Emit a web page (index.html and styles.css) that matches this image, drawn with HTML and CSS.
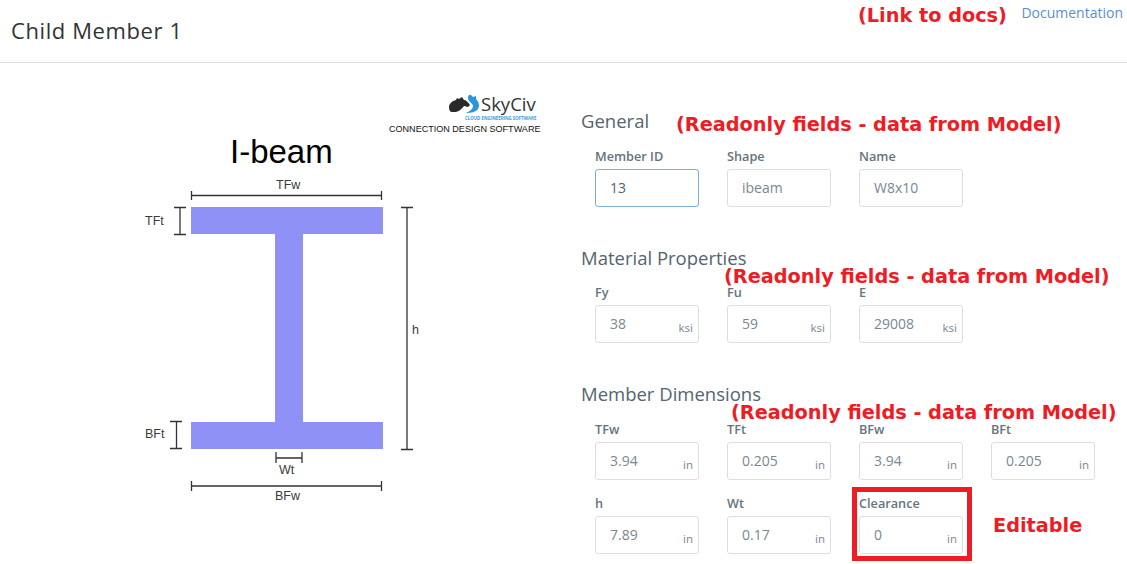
FILE: index.html
```html
<!DOCTYPE html>
<html lang="en">
<head>
<meta charset="utf-8">
<title>Child Member 1</title>
<link rel="stylesheet" href="styles.css">
</head>
<body>
<div class="page">
  <header class="topbar">
    <h1 class="title">Child Member 1</h1>
    <a class="doclink" href="#">Documentation</a>
  </header>
  <main class="content">
    <section class="diagram">
      <svg class="beam" width="570" height="501" viewBox="0 63 570 501" xmlns="http://www.w3.org/2000/svg">
        <path class="logo-dark" d="M449 107c0-3 3-6 7-7l1-2 2 1 3-2 2 3c2 0 4 2 6 5l-2 2-4-1c-2 2-4 5-8 6h-4c-2 0-3-2-3-5z"/>
        <path class="logo-blue" d="M471 95l2 2 3-1v3c3 3 4 7 2 10-2 3-7 4-12 4 4-2 7-4 7-7 0-3-5-4-5-8 0-2 1-4 3-3z"/>
        <text class="logo-word" x="481" y="111">SkyCiv</text>
        <text class="logo-tag" x="465" y="120">CLOUD ENGINEERING SOFTWARE</text>
        <text class="logo-sub" x="389" y="132">CONNECTION DESIGN SOFTWARE</text>
        <text class="beam-title" x="230" y="163">I-beam</text>
        <polygon class="section" points="191,207 383,207 383,234 303,234 303,422 383,422 383,449 191,449 191,422 275,422 275,234 191,234"/>
        <g class="dim">
          <path d="M191.500 191v9M381.500 191v9M191 195.500h191"/>
          <path d="M174 207.500h12M180 207v27M174 234.500h12"/>
          <path d="M401 207.500h12M407 207v243M401 449.500h12"/>
          <path d="M170 421.500h12M176.500 421v28M170 448.500h12"/>
          <path d="M276 452v11M302 452v11M276 458h26"/>
          <path d="M191.500 481v10M381.500 481v10M191 486h191"/>
        </g>
        <g class="dim-label">
          <text x="276" y="189">TFw</text>
          <text x="145" y="225">TFt</text>
          <text x="412" y="334">h</text>
          <text x="145" y="438">BFt</text>
          <text x="279" y="474">Wt</text>
          <text x="275" y="500">BFw</text>
        </g>
      </svg>
    </section>
    <section class="form">
      <div class="group group-general">
        <h2 class="group-title">General</h2>
        <div class="fields fields-low">
          <div class="field"><label class="label">Member ID</label><div class="input active">13</div></div>
          <div class="field"><label class="label">Shape</label><div class="input">ibeam</div></div>
          <div class="field"><label class="label">Name</label><div class="input">W8x10</div></div>
        </div>
      </div>
      <div class="group group-material">
        <h2 class="group-title">Material Properties</h2>
        <div class="fields">
          <div class="field"><label class="label">Fy</label><div class="input">38<span class="unit">ksi</span></div></div>
          <div class="field"><label class="label">Fu</label><div class="input">59<span class="unit">ksi</span></div></div>
          <div class="field"><label class="label">E</label><div class="input">29008<span class="unit">ksi</span></div></div>
        </div>
      </div>
      <div class="group group-dims">
        <h2 class="group-title">Member Dimensions</h2>
        <div class="fields fields-low">
          <div class="field"><label class="label">TFw</label><div class="input">3.94<span class="unit">in</span></div></div>
          <div class="field"><label class="label">TFt</label><div class="input">0.205<span class="unit">in</span></div></div>
          <div class="field"><label class="label">BFw</label><div class="input">3.94<span class="unit">in</span></div></div>
          <div class="field"><label class="label">BFt</label><div class="input">0.205<span class="unit">in</span></div></div>
          <div class="field"><label class="label">h</label><div class="input">7.89<span class="unit">in</span></div></div>
          <div class="field"><label class="label">Wt</label><div class="input">0.17<span class="unit">in</span></div></div>
          <div class="field"><label class="label">Clearance</label><div class="input">0<span class="unit">in</span></div></div>
        </div>
      </div>
    </section>
  </main>
  <div class="note note-docs">(Link to docs)</div>
  <div class="note note-general">(Readonly fields - data from Model)</div>
  <div class="note note-material">(Readonly fields - data from Model)</div>
  <div class="note note-dims">(Readonly fields - data from Model)</div>
  <div class="note note-edit">Editable</div>
  <div class="highlight"></div>
</div>
</body>
</html>
```
FILE: styles.css
```css
* { box-sizing: border-box; }
html, body { margin: 0; padding: 0; }
body {
  background: #fff;
  font-family: "Open Sans", "Liberation Sans", sans-serif;
  overflow: hidden;
}
.page { position: relative; width: 1127px; height: 564px; overflow: hidden; }
.topbar {
  height: 63px;
  border-bottom: 1px solid #dedede;
  display: flex;
  justify-content: space-between;
  align-items: flex-start;
  padding: 0 4px 0 11px;
}
.title {
  margin: 17px 0 0;
  font-size: 22px;
  line-height: 27px;
  font-weight: 400;
  color: #333;
  letter-spacing: 0.6px;
}
.doclink {
  margin-top: 4px;
  font-size: 14px;
  line-height: 18px;
  color: #5a90cc;
  text-decoration: none;
}
.content { display: flex; }
.diagram { width: 570px; flex: none; }
.beam { display: block; }
.form { padding: 46px 0 0 11px; flex: 1; }
.group-title {
  margin: 0;
  font-size: 18.500px;
  line-height: 23px;
  font-weight: 400;
  color: #55646e;
}
.group-material { margin-top: 39px; }
.group-dims { margin-top: 39px; }
.fields {
  display: grid;
  grid-template-columns: repeat(4, 104px);
  column-gap: 28px;
  row-gap: 16px;
  padding: 16px 0 0 14px;
}
.fields-low { padding-top: 17px; }
.field { display: flex; flex-direction: column; }
.label {
  font-size: 12.700px;
  line-height: 14px;
  font-weight: 600;
  color: #65737e;
  height: 20px;
}
.input {
  position: relative;
  height: 38px;
  border: 1px solid #dcdfe2;
  border-radius: 3px;
  padding: 0 14px;
  font-size: 14px;
  line-height: 36px;
  color: #7b868f;
  background: #fff;
}
.active { border-color: #78b0dc; color: #56626c; }
.unit {
  position: absolute;
  right: 5px;
  bottom: 7px;
  font-size: 11.500px;
  line-height: 15px;
  color: #7b868f;
}
.note {
  position: absolute;
  font-family: "DejaVu Sans", sans-serif;
  font-weight: 700;
  color: #ee1c25;
  font-size: 19.300px;
  line-height: 24px;
  white-space: nowrap;
}
.note-docs { left: 858px; top: 4px; }
.note-general { left: 676px; top: 113px; }
.note-material { left: 724px; top: 265px; }
.note-dims { left: 731px; top: 401px; }
.note-edit { left: 993px; top: 514px; }
.highlight {
  position: absolute;
  left: 852px;
  top: 487px;
  width: 120px;
  height: 74px;
  border: 5px solid #ee1c25;
}
.section { fill: #8f91f7; }
.dim path { fill: none; stroke: #333; stroke-width: 1.300; }
.dim-label text {
  font-family: "Liberation Sans", sans-serif;
  font-size: 12.500px;
  fill: #3a3a3a;
}
.beam-title {
  font-family: "Liberation Sans", sans-serif;
  font-size: 33px;
  fill: #000;
}
.logo-dark { fill: #2a2a2a; }
.logo-blue { fill: #2b96dc; }
.logo-word {
  font-family: "Open Sans", sans-serif;
  font-size: 18.500px;
  fill: #333;
}
.logo-tag {
  font-family: "Open Sans", sans-serif;
  font-size: 4.400px;
  font-weight: 700;
  fill: #3c9ad8;
}
.logo-sub {
  font-family: "Liberation Sans", sans-serif;
  font-size: 9.050px;
  fill: #111;
}
```
